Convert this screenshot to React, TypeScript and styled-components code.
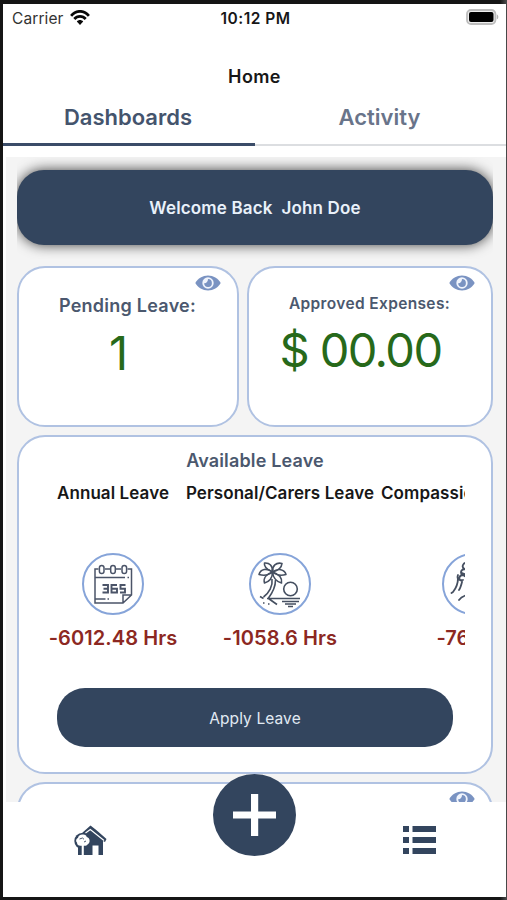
import React from "react";
import styled, { createGlobalStyle } from "styled-components";

const navy = "#33455e";
const outline = "#b0c2e2";

const GlobalStyle = createGlobalStyle`
  * { box-sizing: border-box; }
  body { margin: 0; background: #151515; font-family: Inter, "Liberation Sans", sans-serif; }
  svg { display: block; }
`;

const Device = styled.div`
  width: 507px;
  height: 900px;
  padding: 4px 1px 3px 3px;
  background: linear-gradient(90deg, #151515 0 500px, #484848 506px);
  overflow: hidden;
`;

const Screen = styled.div`
  height: 893px;
  display: flex;
  flex-direction: column;
  background: #fff;
  overflow: hidden;
`;

const StatusBar = styled.header`
  height: 30px;
  display: grid;
  grid-template-columns: 1fr auto 1fr;
  align-items: center;
  padding: 0 7px 0 9px;
`;

const Carrier = styled.div`
  display: flex;
  align-items: center;
  gap: 6px;
  svg { margin-top: -3px; }
`;

const Battery = styled.div`
  justify-self: end;
  margin-top: -4px;
`;

const Label = styled.span<{ $size: number; $weight?: number; $color?: string; $track?: number }>`
  font-size: ${(p) => p.$size}px;
  font-weight: ${(p) => p.$weight ?? 400};
  color: ${(p) => p.$color ?? "#171717"};
  letter-spacing: ${(p) => p.$track ?? 0}px;
  line-height: 1.2;
  white-space: pre;
`;

const Title = styled.h1`
  margin: 0;
  height: 63px;
  padding-top: 32px;
  font-size: 18px;
  font-weight: 600;
  letter-spacing: 0.4px;
  line-height: 22px;
  color: #171717;
  text-align: center;
`;

const Tabs = styled.nav`
  display: grid;
  grid-template-columns: 252px 1fr;
  height: 49px;
`;

const Tab = styled.div<{ $active?: boolean }>`
  display: flex;
  justify-content: center;
  padding: 7px 2px 0 0;
  border-bottom: ${(p) => (p.$active ? "3px solid #3b4c68" : "2px solid #dcdee1")};
`;

const Content = styled.main`
  flex: 1;
  min-height: 0;
  margin-top: 11px;
  margin-left: 3px;
  background: #f4f4f4;
  padding: 0 13px 0 11px;
  overflow: hidden;
`;

const BannerClip = styled.div`
  height: 102px;
  padding-top: 13px;
  overflow: hidden;
`;

const Banner = styled.div`
  height: 75px;
  padding-top: 2px;
  border-radius: 27px;
  background: ${navy};
  box-shadow: 0 0 13px rgba(0, 0, 0, 0.75);
  display: flex;
  align-items: center;
  justify-content: center;
`;

const StatRow = styled.div`
  display: grid;
  grid-template-columns: 222px 246px;
  column-gap: 8px;
  margin: 7px 0 8px;
`;

const Card = styled.section<{ $height: number }>`
  position: relative;
  height: ${(p) => p.$height}px;
  border: 2px solid ${outline};
  border-radius: 28px;
  background: #fff;
`;

const StatCard = styled(Card)`
  display: flex;
  flex-direction: column;
  align-items: center;
  padding: 27px 1px 0 0;
`;

const StatValue = styled.div<{ $track?: number }>`
  margin-top: 8px;
  padding-right: 18px;
  font-size: 47px;
  line-height: 56px;
  letter-spacing: ${(p) => p.$track ?? 0}px;
  color: #27691a;
  white-space: nowrap;
`;

const EyeSlot = styled.div`
  position: absolute;
  top: 7px;
  right: 16px;
`;

const LeaveCard = styled(Card)`
  margin: 0 0 8px;
  padding: 13px 25px 0 38px;
  display: flex;
  flex-direction: column;
`;

const CardHeading = styled.div`
  text-align: center;
  line-height: 22px;
  margin-right: 13px;
`;

const LeaveList = styled.div`
  display: flex;
  width: 419px;
  margin: 11px 0 0 -11px;
  height: 196px;
  overflow: hidden;
`;

const LeaveItem = styled.div<{ $width: number }>`
  flex: 0 0 ${(p) => p.$width}px;
  height: 196px;
  display: flex;
  flex-direction: column;
  align-items: center;
`;

const LeaveIcon = styled.div`
  margin: 50px 0 11px;
  width: 62px;
  height: 62px;
  border: 2px solid #86a4d9;
  border-radius: 50%;
`;

const ApplyButton = styled.button`
  width: 396px;
  height: 59px;
  margin-top: 9px;
  padding: 3px 0 0;
  border: 0;
  border-radius: 28px;
  background: ${navy};
  font-family: inherit;
`;

const BottomBar = styled.footer`
  position: relative;
  height: 95px;
  display: grid;
  grid-template-columns: 174px 1fr 174px;
  align-items: start;
  justify-items: center;
  padding: 23px 0 0;
  background: #fff;
`;

const ListSlot = styled.div`
  padding: 1px 0 0;
`;

const AddButton = styled.div`
  position: absolute;
  left: 210px;
  top: -28px;
  width: 83px;
  height: 82px;
  border-radius: 50%;
  background: ${navy};
  display: grid;
  place-items: center;
`;

const Eye = () => (
  <svg width="26" height="16" viewBox="0 0 26 16">
    <path d="M.3 8C3.2 3.3 7.5 .5 13 .5S22.8 3.3 25.7 8C22.8 12.7 18.5 15.5 13 15.5S3.2 12.7 .3 8Z" fill="#7a93c2" />
    <circle cx="13" cy="8" r="5.7" fill="#f0f4fc" />
    <path d="M13 4.1A3.900 3.900 0 1 1 9.1 8.300C11.200 8.600 13 7 13 4.100Z" fill="#7a93c2" />
  </svg>
);

const Wifi = () => (
  <svg width="20" height="16" viewBox="0 0 20 16" fill="none" stroke="#090909" strokeWidth="2.7">
    <path d="M1.1 5.8C6-.2 14-.2 18.9 5.8" />
    <path d="M4.3 9c3.1-3.6 8.3-3.6 11.4 0" />
    <path d="M6.8 11.5c1.7-2 4.7-2 6.4 0L10 15Z" fill="#090909" stroke="none" />
  </svg>
);

const BatteryIcon = () => (
  <svg width="33" height="16" viewBox="0 0 33 16">
    <rect x="1" y="1" width="28.4" height="14" rx="4" fill="#eee" stroke="#bdbdbd" strokeWidth="1.8" />
    <rect x="3" y="3" width="24.5" height="10" rx="2" fill="#000" />
    <path d="M30.8 5.5c2 .6 2 4.2 0 4.8Z" fill="#b5b5b5" />
  </svg>
);

const Calendar = () => (
  <svg width="58" height="58" viewBox="0 0 58 58" fill="none" stroke="#4b5468" strokeWidth="1.5">
    <path d="M14.5 14H11v34h28l8.5-8V14h-4M21 14h5M32 14h5M11 22.5h30M43.5 22.5h1.5M11.5 44h10M23.5 44h1.5M39 48v-8h8" />
    <rect x="15.4" y="10.5" width="4.6" height="8" rx="2.3" />
    <rect x="26.7" y="10.5" width="4.6" height="8" rx="2.3" />
    <rect x="38" y="10.5" width="4.6" height="8" rx="2.3" />
    <g strokeWidth="1.9">
      <path d="M18.5 30h5.500v7.500h-5.500M19.500 33.800h4.500M33 30h-5.500v7.500h5.500v-3.700h-5.500M41.500 30h-5v3.800h4.500v3.700h-5" />
    </g>
  </svg>
);

const Palm = () => (
  <svg width="58" height="58" viewBox="0 0 58 58" fill="none" stroke="#454f60" strokeWidth="1.6" strokeLinejoin="round">
    <path d="M21.5 17C17 15 12.5 12 13.5 8 18.5 7.5 22 11 21.5 17Z" />
    <path d="M21.5 17C21 11 25 7 31 8.5 30.5 13 26 16 21.5 17Z" />
    <path d="M21.5 17C16 12.500 9.500 14 8 19.500 13 21 18 20 21.500 17Z" />
    <path d="M21.5 17C27 13 33.500 14 35 19.500 30 21 25 20 21.500 17Z" />
    <path d="M21.5 17C15.500 19 12 23 13.500 28 18.500 26.500 21.500 22.500 21.500 17Z" />
    <path d="M21.5 17C27.500 19 31.500 22.500 30.500 28 25.500 26.500 22 22.500 21.500 17Z" />
    <path d="M21 24c1 7-3 14-8.500 18M24.500 25c0 7-2.500 12-7 18M9 41.500l3.500 2M16 43.500h33M17.500 43.500l8.500 6M12 48h1.500M17 49h1.500M31 46.500h17M34 49h11M37 51.500h5" />
    <circle cx="39.5" cy="34" r="6.8" />
  </svg>
);

const Hands = () => (
  <svg width="58" height="58" viewBox="-1 0 58 58" fill="none" stroke="#454f60" strokeWidth="1.8" strokeLinecap="round">
    <path d="M23 8c-5-1-7 4-3.500 6-4.500 1-4.500 5-1 6-5 0-5.500 5-1.500 6M19.500 14c2 1.500 4 1 5-.5M17 18l7 3M18.500 20c2 2 4 2 6 0M13 20c-1.500 4 1 6 5 5M13 23c0 6-1 9-5 14M17 27c-1 4-1.500 6-3 8M14 45c2-3 4-4 8-5M8 37l-1.500 1" />
  </svg>
);

const HouseIcon = () => (
  <svg width="33" height="31" viewBox="0 0 33 31">
    <path d="M4 11 8 8 16.5.5 21 4l3 2.500L32.500 14 31 17l-2-1V30H4Z" fill={navy} />
    <circle cx="8.3" cy="16" r="8" fill={navy} />
    <path d="m11.5 8 4.800-3.500L30 15.500" fill="none" stroke="#fff" strokeWidth="1.2" />
    <path d="M18.5 20.500h6V30h-6z" fill="#fff" />
    <path d="M8.500 9.500c2.500-.3 4 1 4.200 2.600 3.500.8 4 6 .8 7.400-1.200 1.500-2.500 1.500-3.700 1.200V30H7.700v-9.300C5 21.300 3 20 3 17.500c-1.500-1.500-.8-4 1-4.600.3-2 2-3.300 4.500-3.400Z" fill="#fff" />
    <path d="m5.500 14 3-1 1.500 1.300M10 17l2-1" fill="none" stroke={navy} strokeWidth=".9" />
  </svg>
);

const ListIcon = () => (
  <svg width="33" height="28" viewBox="0 0 33 28" fill={navy}>
    <path d="M0 0h6v6H0zM9.5 0H33v6H9.500zM0 11h6v6H0zM9.500 11H33v6H9.500zM0 22h6v6H0zM9.500 22H33v6H9.500z" />
  </svg>
);

const Plus = () => (
  <svg width="43" height="42" viewBox="0 0 43 42" fill="#fff">
    <path d="M18 0h7.200v17.500H43v7H25.200V42H18V24.500H0v-7h18z" />
  </svg>
);

const leaves = [
  { name: "Annual Leave", hours: "-6012.48 Hrs", width: 134, icon: <Calendar /> },
  { name: "Personal/Carers Leave", hours: "-1058.6 Hrs", width: 200, icon: <Palm /> },
  { name: "Compassionate Leave", hours: "-76 Hrs", width: 185, icon: <Hands /> },
];

export default function App() {
  return (
    <Device>
      <GlobalStyle />
      <Screen>
        <StatusBar>
          <Carrier><Label $size={15.5} $color="#333" $track={0.1}>Carrier</Label><Wifi /></Carrier>
          <Label $size={15.5} $weight={600} $track={0.5}>10:12 PM</Label>
          <Battery><BatteryIcon /></Battery>
        </StatusBar>
        <Title>Home</Title>
        <Tabs>
          <Tab $active><Label $size={22} $weight={560} $color="#44546d">Dashboards</Label></Tab>
          <Tab><Label $size={22} $weight={560} $color="#69748a">Activity</Label></Tab>
        </Tabs>
        <Content>
          <BannerClip>
            <Banner><Label $size={17} $weight={600} $color="#e9f1fa" $track={0.15}>{"Welcome Back  John Doe"}</Label></Banner>
          </BannerClip>
          <StatRow>
            <StatCard $height={161}>
              <EyeSlot><Eye /></EyeSlot>
              <Label $size={18} $weight={600} $color="#4b586e" $track={0.25}>Pending Leave:</Label>
              <StatValue>1</StatValue>
            </StatCard>
            <StatCard $height={161}>
              <EyeSlot><Eye /></EyeSlot>
              <Label $size={15.5} $weight={600} $color="#4b586e" $track={0.35}>Approved Expenses:</Label>
              <StatValue $track={-1.6}>$ 00.00</StatValue>
            </StatCard>
          </StatRow>
          <LeaveCard $height={339}>
            <CardHeading><Label $size={18} $weight={560} $color="#4b586e" $track={0.15}>Available Leave</Label></CardHeading>
            <LeaveList>
              {leaves.map((l) => (
                <LeaveItem key={l.name} $width={l.width}>
                  <Label $size={17} $weight={600} $track={0.08}>{l.name}</Label>
                  <LeaveIcon>{l.icon}</LeaveIcon>
                  <Label $size={20} $weight={600} $color="#8c2822" $track={0.08}>{l.hours}</Label>
                </LeaveItem>
              ))}
            </LeaveList>
            <ApplyButton><Label $size={15.5} $color="#e1eaf3" $track={0.1}>Apply Leave</Label></ApplyButton>
          </LeaveCard>
          <StatCard $height={161}><EyeSlot><Eye /></EyeSlot></StatCard>
        </Content>
        <BottomBar>
          <HouseIcon />
          <span />
          <ListSlot><ListIcon /></ListSlot>
          <AddButton><Plus /></AddButton>
        </BottomBar>
      </Screen>
    </Device>
  );
}
